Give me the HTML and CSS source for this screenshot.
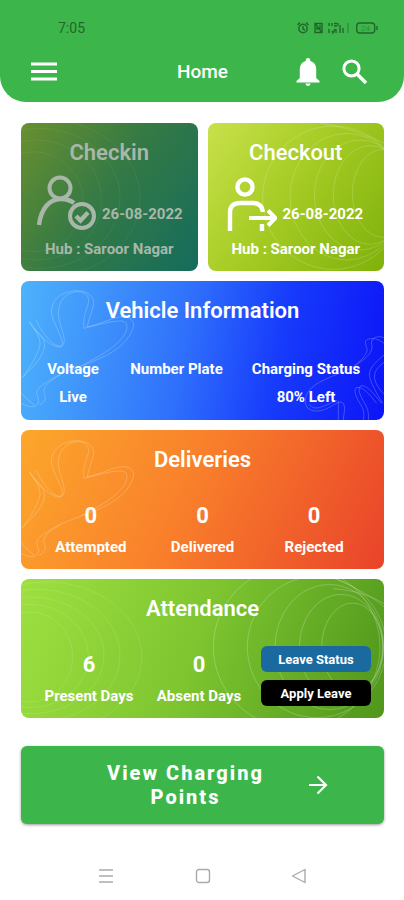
FILE: index.html
```
<!DOCTYPE html>
<html lang="en">
<head>
<meta charset="utf-8">
<meta name="viewport" content="width=device-width, initial-scale=1">
<title>Home</title>
<link rel="stylesheet" href="styles.css">
</head>
<body>
<header class="top">
  <div class="status">
    <span class="clock">7:05</span>
    <svg class="status-icons" viewBox="0 0 84 16" width="84" height="16" aria-hidden="true">
      <g fill="none" stroke="#23662b" stroke-width="1.4">
        <circle cx="7" cy="8.500" r="4.200"/><path d="M7 6v3l2 1M1.500 5 4 2.500M12.500 5 10 2.500"/>
        <path d="M19 3.500h7v9h-7zM19 3l7 10M21 10V7l3 3V5"/>
        <path d="M33 3v3M36 3v3M38 3.500h3M38 6h3M42 3v3M33 9v4M36 11l1 2 2-4M40 9v4M44 5v8M47 8v5"/>
        <path d="M52 3v10" stroke="#2f8f3a"/>
        <rect x="60.700" y="3" width="18" height="10" rx="3"/><path d="M81 6v4"/>
      </g>
      <text x="69.500" y="11" class="battery">24</text>
    </svg>
  </div>
  <div class="bar">
    <button class="icon-btn" aria-label="Menu"><svg width="26" height="26" viewBox="0 0 26 26"><path d="M0 5h26M0 12.500h26M0 20h26" stroke="#fff" stroke-width="3"/></svg></button>
    <h1>Home</h1>
    <div class="actions">
      <button class="icon-btn" aria-label="Notifications"><svg width="24" height="28" viewBox="0 0 24 28" fill="#fff"><path d="M12 0c1.300 0 2.200.9 2.200 2v1c4 1 6 4.400 6 8.300V20l3.300 3v1.500H.5V23l3.300-3v-8.700c0-3.900 2-7.300 6-8.300V2c0-1.100.9-2 2.200-2zM9.500 25.500h5c0 1.300-1.100 2.500-2.500 2.500s-2.500-1.200-2.500-2.500z"/></svg></button>
      <button class="icon-btn" aria-label="Search"><svg width="26" height="26" viewBox="0 0 26 26" fill="none" stroke="#fff"><circle cx="9.500" cy="9.500" r="7.600" stroke-width="3"/><path d="M15 15l9 9" stroke-width="3.600"/></svg></button>
    </div>
  </div>
</header>

<main>
  <div class="pair">
    <section class="card check checkin">
      <svg class="art left" viewBox="33 24 528 444" width="176" height="148" aria-hidden="true">
        <ellipse cx="110" cy="250" rx="280" ry="235"/><ellipse cx="90" cy="250" rx="240" ry="210"/><ellipse cx="80" cy="255" rx="195" ry="180"/><ellipse cx="70" cy="260" rx="150" ry="150"/>
      </svg>
      <h2>Checkin</h2>
      <div class="when">
        <svg width="59" height="56" viewBox="0 0 59 56" fill="none" stroke="currentColor" stroke-width="4">
          <circle cx="23" cy="13" r="10.500"/><path d="M2 50C4 34 12 24 24 24c5 0 9 1 13 4" stroke-width="4.400"/>
          <circle cx="45" cy="41" r="12"/><path d="M39 41l4.500 4.500L51 37.500" stroke-width="4.400"/>
        </svg>
        <time datetime="2022-08-26">26-08-2022</time>
      </div>
      <p>Hub : Saroor Nagar</p>
    </section>
    <section class="card check checkout">
      <svg class="art right" viewBox="21 24 531 444" width="177" height="148" aria-hidden="true">
        <ellipse cx="400" cy="248" rx="212" ry="215"/><ellipse cx="440" cy="245" rx="170" ry="190"/><ellipse cx="480" cy="240" rx="137" ry="165"/><ellipse cx="510" cy="240" rx="110" ry="148"/><ellipse cx="550" cy="235" rx="93" ry="132"/><path d="M360 25C440 35 510 65 552 85"/>
      </svg>
      <h2>Checkout</h2>
      <div class="when">
        <svg width="50" height="54" viewBox="0 0 50 54" fill="none" stroke="currentColor" stroke-width="4.400">
          <circle cx="18" cy="10" r="7.600"/><path d="M3 54V35c0-6 4-9 10-9h13c6 0 9 3 10 9M35 47v7"/>
          <path d="M22 41h26M41 33.500l7.500 7.500-7.500 7.500" stroke-width="4"/>
        </svg>
        <time datetime="2022-08-26">26-08-2022</time>
      </div>
      <p>Hub : Saroor Nagar</p>
    </section>
  </div>

  <section class="card wide vehicle">
    <svg class="art left" viewBox="33 18 540 417" width="180" height="139" aria-hidden="true">
      <path id="flower" d="M58 140C75 170 115 212 145 216C180 218 130 150 125 118C120 75 155 48 200 47C235 47 256 68 250 92C242 120 235 138 232 155C270 150 300 128 338 125C360 124 374 138 370 156C360 195 320 228 275 248C215 275 160 290 125 312C100 328 80 338 80 355C84 370 90 378 82 388C68 402 50 392 33 386M78 135C95 170 125 214 152 214C180 205 145 150 145 115C145 75 170 52 200 50C232 50 240 68 234 88C225 115 218 135 222 160C260 150 295 140 325 138C350 136 355 150 348 170C330 210 275 240 215 272M58 140C72 160 92 185 90 210C80 250 50 290 35 310M72 160C95 180 108 200 102 222C90 260 62 280 40 305M150 300C115 320 98 335 102 352C112 372 100 385 88 390M33 352C42 368 60 378 72 390"/>
    </svg>
    <svg class="art right" viewBox="12 18 540 417" width="180" height="139" aria-hidden="true">
      <path d="M552 188C530 180 512 190 515 206C522 228 500 248 480 262C445 290 380 305 345 330C320 350 315 365 316 385C322 408 345 412 370 405C400 395 418 372 430 385C438 400 430 420 430 435M552 205C540 195 525 188 505 192C490 198 498 210 502 225C495 245 485 255 465 270M552 240C535 255 508 275 508 300C512 325 530 355 548 385M552 262C535 275 520 290 524 312C528 330 540 345 552 358M545 385C520 355 500 330 484 332C470 338 480 362 494 385C506 405 506 420 505 435M530 385C508 358 488 332 468 338C460 350 470 370 484 392C494 410 492 425 490 435M415 378V435M328 388C338 404 355 400 375 392L412 376"/>
    </svg>
    <h2>Vehicle Information</h2>
    <dl class="cols info">
      <div><dt>Voltage</dt><dd>Live</dd></div>
      <div><dt>Number Plate</dt><dd></dd></div>
      <div><dt>Charging Status</dt><dd>80% Left</dd></div>
    </dl>
  </section>

  <section class="card wide deliveries">
    <svg class="art left" viewBox="33 15 540 417" width="180" height="139" aria-hidden="true"><use href="#flower"/></svg>
    <h2>Deliveries</h2>
    <dl class="cols counts">
      <div><dt>Attempted</dt><dd>0</dd></div>
      <div><dt>Delivered</dt><dd>0</dd></div>
      <div><dt>Rejected</dt><dd>0</dd></div>
    </dl>
  </section>

  <section class="card wide attendance">
    <svg class="art left faint" viewBox="33 21 540 417" width="180" height="139" aria-hidden="true">
      <ellipse cx="60" cy="255" rx="128" ry="135"/><ellipse cx="60" cy="252" rx="175" ry="155"/><ellipse cx="60" cy="250" rx="222" ry="175"/><ellipse cx="80" cy="250" rx="250" ry="198"/><ellipse cx="110" cy="255" rx="285" ry="225"/>
    </svg>
    <svg class="art right" viewBox="12 21 540 417" width="180" height="139" aria-hidden="true">
      <ellipse cx="290" cy="225" rx="250" ry="245"/><ellipse cx="350" cy="225" rx="208" ry="212"/><ellipse cx="388" cy="225" rx="163" ry="188"/><ellipse cx="423" cy="225" rx="125" ry="158"/><ellipse cx="457" cy="225" rx="92" ry="132"/><path d="M410 21C480 55 520 75 552 105M400 50C470 55 520 75 552 95"/>
    </svg>
    <h2>Attendance</h2>
    <div class="duo">
      <dl class="counts two">
        <div><dt>Present Days</dt><dd>6</dd></div>
        <div><dt>Absent Days</dt><dd>0</dd></div>
      </dl>
      <div class="leave">
        <button class="pill blue">Leave Status</button>
        <button class="pill black">Apply Leave</button>
      </div>
    </div>
  </section>

  <button class="cta">
    <span>View Charging Points</span>
    <svg width="20" height="20" viewBox="0 0 20 20" fill="none" stroke="#fff" stroke-width="2.200"><path d="M1 10h17M9.500 1.500 18 10l-8.500 8.500"/></svg>
  </button>
</main>

<nav class="system" aria-label="System">
  <button class="icon-btn" aria-label="Recent apps"><svg width="16" height="16" viewBox="0 0 16 16" stroke="#aaa" stroke-width="1.300"><path d="M1 2h14M1 8h14M1 14h14"/></svg></button>
  <button class="icon-btn" aria-label="Home screen"><svg width="16" height="16" viewBox="0 0 16 16" fill="none" stroke="#aaa" stroke-width="1.400"><rect x="1.500" y="1.500" width="13" height="13" rx="2.500"/></svg></button>
  <button class="icon-btn" aria-label="Back"><svg width="16" height="16" viewBox="0 0 16 16" fill="none" stroke="#aaa" stroke-width="1.400" stroke-linejoin="round"><path d="M14 1.500v13L1.500 8z"/></svg></button>
</nav>
</body>
</html>
```

FILE: styles.css
```
* { box-sizing: border-box; }
body {
  margin: 0;
  min-height: 100vh;
  display: flex;
  flex-direction: column;
  background: #fff;
  color: #fff;
  font-family: Roboto, "Liberation Sans", sans-serif;
}
h1, h2, p, dl, dd { margin: 0; }
button { border: 0; padding: 0; color: inherit; font: inherit; cursor: pointer; }
svg { display: block; }
.icon-btn { background: none; }

.top {
  background: #3cb64a;
  border-radius: 0 0 26px 26px;
  padding: 20px 24px 14px 31px;
}
.status { display: flex; justify-content: space-between; align-items: center; padding-left: 27px; height: 16px; }
.clock { color: #23662b; font-size: 14px; line-height: 16px; }
.battery { fill: #2f8f3a; font-size: 8px; text-anchor: middle; }
.bar {
  display: grid;
  grid-template-columns: 1fr auto 1fr;
  align-items: center;
  margin-top: 20px;
  padding-right: 12px;
  height: 32px;
}
.bar .icon-btn { justify-self: start; }
h1 { font-size: 19px; line-height: 24px; font-weight: 500; padding-left: 6px; }
.actions { display: flex; justify-content: flex-end; align-items: center; gap: 22px; }

main { display: flex; flex-direction: column; gap: 10px; padding: 21px 20px 0 21px; }
.pair { display: grid; grid-template-columns: 1fr 1fr; gap: 10px; }
.card { position: relative; overflow: hidden; border-radius: 8px; text-align: center; }
.card > * { position: relative; }
.card > .art {
  position: absolute;
  top: 0;
  fill: none;
  stroke: #fff;
  stroke-width: 3;
  stroke-opacity: .22;
}
.art.left { left: 0; }
.art.right { right: 0; }
.card > .faint { stroke-opacity: .12; }
h2 { font-size: 22px; line-height: 28px; font-weight: 600; }

.check { padding: 16px 12px 13px; }
.check h2 { font-weight: 500; }
.when { display: flex; align-items: flex-end; height: 64px; gap: 6px; padding: 0 2px 0 4px; }
.when time { font-size: 15px; line-height: 18px; font-weight: 700; padding-bottom: 8px; }
.check p { font-size: 15px; line-height: 18px; font-weight: 700; margin-top: 9px; }
.checkin { background: linear-gradient(125deg, #69902f, #367a44 45%, #146c5c); color: #a9b7aa; }
.checkin h2 { font-weight: 600; }
.card.checkin > .art { stroke-opacity: .06; }
.checkout { background: linear-gradient(125deg, #c8e14a, #a6cc25 45%, #7fb10b); }
.checkout .when { padding-left: 7px; }
.card.checkout > .art { stroke-opacity: .18; }

.wide { min-height: 139px; padding: 16px 14px 11px; }
.vehicle { background: linear-gradient(100deg, #4db3fb, #2f70fb 45%, #173bfb 70%, #0c14f8); }
.deliveries { background: linear-gradient(115deg, #fca72b, #f9802b 45%, #e9432a); }
.attendance { background: linear-gradient(110deg, #9ee040, #7ec530 48%, #4f961c); }
.cols { display: grid; grid-template-columns: repeat(3, 1fr); }
dt { font-size: 15px; line-height: 20px; font-weight: 700; white-space: nowrap; }
.info { margin-top: 34px; grid-template-columns: 76px 1fr 128px; }
.info dd { font-size: 15px; line-height: 20px; font-weight: 700; margin-top: 8px; }
.counts div { display: flex; flex-direction: column-reverse; }
.counts dd { font-size: 22px; line-height: 28px; font-weight: 700; margin-bottom: 7px; }
.deliveries .counts { margin-top: 28px; }
.attendance { padding-left: 13px; padding-right: 13px; }
.duo { display: grid; grid-template-columns: 2fr 1fr; column-gap: 7px; }
.two { display: grid; grid-template-columns: 1fr 1fr; padding-top: 28px; }
.leave { display: flex; flex-direction: column; gap: 8px; padding-top: 23px; }
.pill { height: 26px; border-radius: 6px; font-size: 13px; font-weight: 700; }
.blue { background: #1a699f; }
.black { background: #000; }

.cta {
  display: flex;
  align-items: center;
  margin-top: 18px;
  min-height: 78px;
  padding: 0 56px 0 76px;
  border-radius: 6px;
  background: #3cb64a;
  box-shadow: 0 1px 3px rgba(0, 0, 0, .4);
}
.cta span { flex: 1; font-size: 20px; line-height: 24px; font-weight: 800; letter-spacing: 2px; text-align: center; }
.cta svg { margin-left: 34px; }

.system { margin-top: auto; padding: 12px 97px 16px 98px; display: flex; justify-content: space-between; }
```
